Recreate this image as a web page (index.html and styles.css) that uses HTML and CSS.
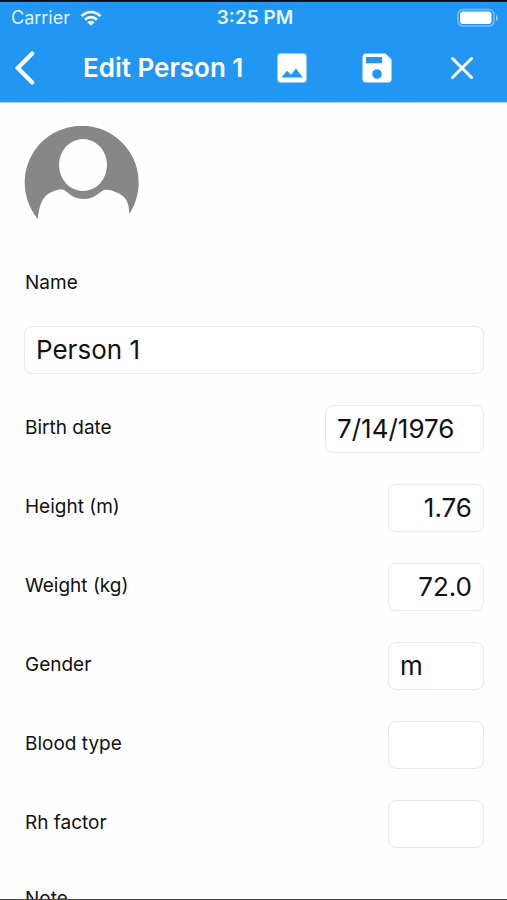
FILE: index.html
```html
<!DOCTYPE html>
<html lang="en">
<head>
<meta charset="utf-8">
<meta name="viewport" content="width=device-width, initial-scale=1">
<title>Edit Person 1</title>
<link rel="stylesheet" href="styles.css">
</head>
<body>
<div class="app">
  <header class="header">
    <div class="status">
      <div class="carrier">
        <span>Carrier</span>
        <svg class="wifi" viewBox="0 0 22 16" aria-hidden="true">
          <path d="M1.500 6.200C7 .600 15 .600 20.500 6.200M5 9.700c3.500-3.400 8.500-3.400 12 0" fill="none" stroke="currentColor" stroke-width="2.600"/>
          <path d="M11 15.800 7.400 12.200c2-1.900 5.200-1.900 7.200 0z" fill="currentColor"/>
        </svg>
      </div>
      <span class="time">3:25 PM</span>
      <svg class="battery" viewBox="0 0 42 20" aria-hidden="true">
        <rect x="1" y="1.500" width="36" height="16.500" rx="5" fill="none" stroke="currentColor" stroke-width="1.500" opacity=".4"/>
        <rect x="3" y="3.500" width="31.500" height="12.500" rx="3" fill="currentColor"/>
        <path d="M39 7c2 1 2 5 0 6z" fill="currentColor" opacity=".6"/>
      </svg>
    </div>
    <nav class="toolbar">
      <button class="tool" type="button" aria-label="Back">
        <svg class="icon-back" viewBox="0 0 20 34" aria-hidden="true"><path d="M17.200 2.500 2.800 17l14.400 14.500" fill="none" stroke="currentColor" stroke-width="4.200" stroke-linecap="round" stroke-linejoin="miter"/></svg>
      </button>
      <h1 class="title">Edit Person 1</h1>
      <button class="tool" type="button" aria-label="Choose picture">
        <svg class="icon" viewBox="0 0 30 30" aria-hidden="true"><path fill="currentColor" fill-rule="evenodd" d="M3.500.500h23a3 3 0 0 1 3 3v23a3 3 0 0 1-3 3h-23a3 3 0 0 1-3-3v-23a3 3 0 0 1 3-3zM4.500 24.500h21.200l-6.700-9-4.800 6.200-4.300-4z"/></svg>
      </button>
      <button class="tool" type="button" aria-label="Save">
        <svg class="icon" viewBox="0 0 30 30" aria-hidden="true"><path fill="currentColor" fill-rule="evenodd" d="M4 .500h19.500l6 6V26a3.500 3.500 0 0 1-3.500 3.500H4A3.500 3.500 0 0 1 .500 26V4A3.500 3.500 0 0 1 4 .500zM4 4v6.200h16V4zM15 16.200a4.800 4.800 0 1 0 0 9.600 4.800 4.800 0 0 0 0-9.600z"/></svg>
      </button>
      <button class="tool" type="button" aria-label="Close">
        <svg class="icon-close" viewBox="0 0 24 24" aria-hidden="true"><path d="m2.500 2.500 19 19m0-19-19 19" stroke="currentColor" stroke-width="3" stroke-linecap="round"/></svg>
      </button>
    </nav>
  </header>
  <main class="content">
    <svg class="avatar" viewBox="0 0 115 94" role="img" aria-label="Profile picture">
      <path fill="#878787" fill-rule="evenodd" d="M13.700 93A57 57 0 1 1 105.300 88C105 76 102 71 94 67C88 64 83 63 80 64C74 67 70 73 60 73C49 73 45 67 40 64C36 62 29 65 24 68C17 73 15 82 13.700 93zM35 39a24 26 0 1 0 48 0a24 26 0 1 0-48 0z"/>
    </svg>
    <form class="form">
      <div class="name-field">
        <label for="name">Name</label>
        <input class="input" id="name" type="text" value="Person 1">
      </div>
      <div class="row"><label for="birth">Birth date</label><input class="input date" id="birth" type="text" value="7/14/1976"></div>
      <div class="row"><label for="height">Height (m)</label><input class="input short number" id="height" type="text" inputmode="decimal" value="1.76"></div>
      <div class="row"><label for="weight">Weight (kg)</label><input class="input short number" id="weight" type="text" inputmode="decimal" value="72.0"></div>
      <div class="row"><label for="gender">Gender</label><input class="input short" id="gender" type="text" value="m"></div>
      <div class="row"><label for="blood">Blood type</label><input class="input short" id="blood" type="text"></div>
      <div class="row"><label for="rh">Rh factor</label><input class="input short" id="rh" type="text"></div>
      <div class="name-field note">
        <label for="note">Note</label>
        <input class="input" id="note" type="text">
      </div>
    </form>
  </main>
</div>
</body>
</html>
```
FILE: styles.css
```css
* {
  box-sizing: border-box;
}

body {
  margin: 0;
  background: #fefefe;
  color: #111;
  font-family: Inter, "Liberation Sans", sans-serif;
  font-size: 19px;
  line-height: 24px;
}

.app {
  display: flex;
  flex-direction: column;
  height: 100vh;
  border-top: 2px solid #06121f;
  border-bottom: 1px solid #48484a;
}

.header {
  flex: none;
  background: #2196f3;
  border-bottom: 1px solid #a5d0f5;
  color: #fff;
}

.status {
  display: grid;
  grid-template-columns: 1fr auto 1fr;
  align-items: center;
  height: 32px;
  padding: 0 8px 0 11px;
}

.carrier {
  display: flex;
  align-items: center;
  gap: 10px;
  color: #e3f2fe;
  font-size: 18px;
}

.wifi {
  width: 22px;
  height: 16px;
  color: #fff;
}

.time {
  font-weight: 600;
  color: #e9f5fe;
}

.battery {
  width: 42px;
  height: 20px;
  justify-self: end;
}

.toolbar {
  display: grid;
  grid-template-columns: 50px 1fr 85px 85px 85px;
  align-items: center;
  height: 68px;
  padding-right: 3px;
}

.title {
  margin: 0;
  padding-left: 33px;
  font-size: 26px;
  font-weight: 600;
  line-height: 32px;
  white-space: nowrap;
}

.tool {
  display: flex;
  align-items: center;
  justify-content: center;
  height: 100%;
  padding: 0;
  border: 0;
  background: none;
  color: inherit;
}

.icon {
  width: 30px;
  height: 30px;
}

.icon-back {
  width: 20px;
  height: 34px;
}

.icon-close {
  width: 24px;
  height: 24px;
}

.content {
  flex: 1;
  min-height: 0;
  padding: 23px 23px 23px 24px;
  overflow-y: auto;
  scrollbar-width: none;
}

.avatar {
  display: block;
  width: 115px;
  height: 94px;
}

.form {
  display: flex;
  flex-direction: column;
  gap: 31px;
  margin-top: 51px;
}

.name-field {
  display: flex;
  flex-direction: column;
  gap: 31px;
}

.note {
  margin-top: 8px;
}

.row {
  display: flex;
  align-items: center;
  justify-content: space-between;
}

label {
  padding-left: 1px;
}

.row label {
  padding-bottom: 2px;
}

.input {
  width: 100%;
  height: 48px;
  padding: 0 11px 2px;
  border: 1px solid #e8e8e8;
  border-radius: 8px;
  background: #fff;
  color: #111;
  font: inherit;
  font-size: 26px;
}

.date {
  width: 159px;
}

.short {
  width: 96px;
}

.number {
  text-align: right;
}
```
